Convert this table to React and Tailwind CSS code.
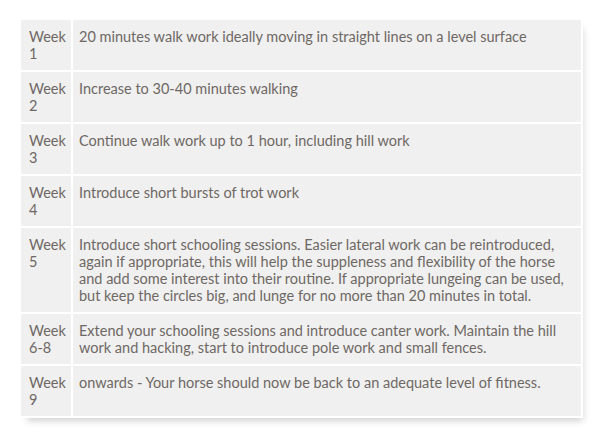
const rows = [
  { week: '1', text: ['20 minutes walk work ideally moving in straight lines on a level surface'] },
  { week: '2', text: ['Increase to 30-40 minutes walking'] },
  { week: '3', text: ['Continue walk work up to 1 hour, including hill work'] },
  { week: '4', text: ['Introduce short bursts of trot work'] },
  {
    week: '5',
    text: [
      'Introduce short schooling sessions. Easier lateral work can be reintroduced,',
      'again if appropriate, this will help the suppleness and flexibility of the horse',
      'and add some interest into their routine. If appropriate lungeing can be used,',
      'but keep the circles big, and lunge for no more than 20 minutes in total.',
    ],
  },
  {
    week: '6-8',
    text: [
      'Extend your schooling sessions and introduce canter work. Maintain the hill',
      'work and hacking, start to introduce pole work and small fences.',
    ],
  },
  { week: '9', text: ['onwards - Your horse should now be back to an adequate level of fitness.'] },
];

export default function App() {
  return (
    <div className="w-[602px] h-[434px] bg-white pl-[19px] pt-[18px] font-['Lato','Liberation_Sans',sans-serif] text-[14.5px] leading-[17px] text-[#6e6864]">
      <table className="w-[564px] border-separate border-spacing-[2px] bg-white shadow-[4px_7px_7px_-4px_rgba(0,0,0,0.18)]">
        <tbody>
          {rows.map((row) => (
            <tr key={row.week}>
              <td className="w-[50px] bg-[#f0f0f0] align-top pl-[8px] pr-[2px] py-[8px]">
                Week
                <br />
                {row.week}
              </td>
              <td className="bg-[#f0f0f0] align-top pl-[6px] pr-[4px] py-[8px] whitespace-nowrap">
                {row.text.map((line, i) => (
                  <div key={i}>{line}</div>
                ))}
              </td>
            </tr>
          ))}
        </tbody>
      </table>
    </div>
  );
}
